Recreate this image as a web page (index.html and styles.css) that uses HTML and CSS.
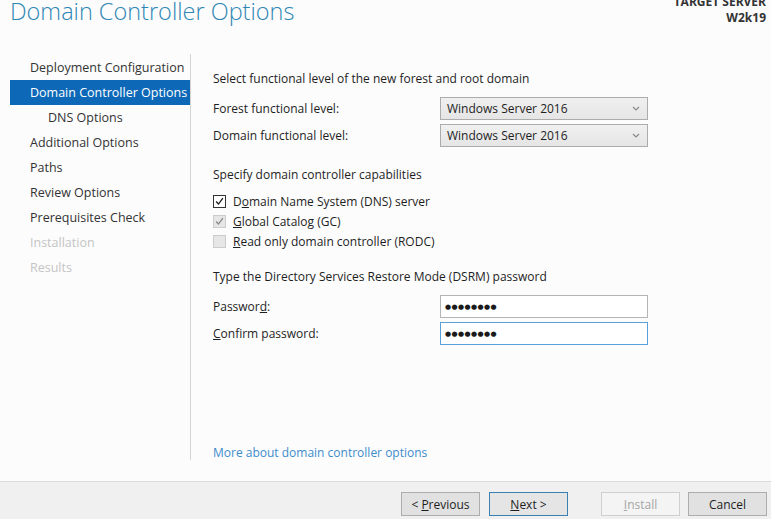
FILE: index.html
```html
<!DOCTYPE html>
<html lang="en">
<head>
  <meta charset="UTF-8" />
  <title>Domain Controller Options</title>
  <link rel="stylesheet" href="styles.css">
</head>
<body>

  <div class="header">
    <h1 class="page-title">Domain Controller Options</h1>
    <div class="target">
      <div>TARGET SERVER</div>
      <div>W2k19</div>
    </div>
  </div>

  <div class="main">
    <ul class="steps">
      <li class="step">Deployment Configuration</li>
      <li class="step active">Domain Controller Options</li>
      <li class="step sub">DNS Options</li>
      <li class="step">Additional Options</li>
      <li class="step">Paths</li>
      <li class="step">Review Options</li>
      <li class="step">Prerequisites Check</li>
      <li class="step disabled">Installation</li>
      <li class="step disabled">Results</li>
    </ul>

    <div class="content">
      <div class="section-title">Select functional level of the new forest and root domain</div>
      <div class="form-grid">
        <label class="field-label">Forest functional level:</label>
        <div class="select">
          <span>Windows Server 2016</span>
          <svg class="chevron" viewBox="0 0 8 5"><path d="M1 1l3 3 3-3" /></svg>
        </div>
        <label class="field-label">Domain functional level:</label>
        <div class="select">
          <span>Windows Server 2016</span>
          <svg class="chevron" viewBox="0 0 8 5"><path d="M1 1l3 3 3-3" /></svg>
        </div>
      </div>

      <div class="section-title gap-lg">Specify domain controller capabilities</div>
      <div class="checks">
        <div class="check-row">
          <span class="checkbox checked">
            <svg viewBox="0 0 13 13"><path d="M2.5 6.5l2.8 3 5.2-7" /></svg>
          </span>
          <span>D<u>o</u>main Name System (DNS) server</span>
        </div>
        <div class="check-row">
          <span class="checkbox checked dim">
            <svg viewBox="0 0 13 13"><path d="M2.5 6.5l2.8 3 5.2-7" /></svg>
          </span>
          <span><u>G</u>lobal Catalog (GC)</span>
        </div>
        <div class="check-row">
          <span class="checkbox dim"></span>
          <span><u>R</u>ead only domain controller (RODC)</span>
        </div>
      </div>

      <div class="section-title gap-md">Type the Directory Services Restore Mode (DSRM) password</div>
      <div class="form-grid">
        <label class="field-label">Passwor<u>d</u>:</label>
        <div class="textbox"><span class="dots">●●●●●●●●</span></div>
        <label class="field-label"><u>C</u>onfirm password:</label>
        <div class="textbox focused"><span class="dots">●●●●●●●●</span></div>
      </div>

      <a class="more-link" href="#">More about domain controller options</a>
    </div>
  </div>

  <div class="footer">
    <button class="btn">&lt; <u>P</u>revious</button>
    <button class="btn default"><u>N</u>ext &gt;</button>
    <button class="btn install" disabled><u>I</u>nstall</button>
    <button class="btn">Cancel</button>
  </div>

</body>
</html>
```

FILE: styles.css
```css
body {
  margin: 0;
  background-color: #fcfcfc;
  color: #1e1e1e;
  font-family: "Open Sans", "Noto Sans", sans-serif;
  font-size: 12px;
  width: 771px;
  height: 519px;
  overflow: hidden;
  display: flex;
  flex-direction: column;
}

.header {
  height: 54px;
  display: flex;
  justify-content: space-between;
  align-items: flex-start;
}

.page-title {
  margin: -3px 0 0 10px;
  font-size: 23.5px;
  line-height: 28px;
  font-weight: 300;
  color: #2e86b4;
}

.target {
  margin-top: -6px;
  padding-right: 5px;
  text-align: right;
  font-weight: bold;
  line-height: 16px;
  color: #333;
}

.main {
  flex: 1;
  display: flex;
  padding-bottom: 21px;
}

.steps {
  list-style: none;
  margin: 0;
  padding: 1px 0 0;
  width: 190px;
  border-right: 1px solid #d4d4d4;
}

.step {
  height: 25px;
  line-height: 26px;
  margin-left: 10px;
  padding-left: 20px;
  font-size: 12.5px;
  color: #333;
  white-space: nowrap;
}
.step.sub {
  padding-left: 38px;
}
.step.active {
  background-color: #0d69b8;
  color: #fff;
}
.step.disabled {
  color: #c4c4c4;
}

.content {
  flex: 1;
  padding: 17px 0 0 22px;
  display: flex;
  flex-direction: column;
}

.section-title {
  line-height: 16px;
  margin-bottom: 10px;
}
.gap-lg {
  margin-top: 20px;
  margin-bottom: 8px;
}
.gap-md {
  margin-top: 18px;
}

.form-grid {
  display: grid;
  grid-template-columns: 227px 208px;
  row-gap: 4px;
  align-items: center;
}

.select {
  height: 23px;
  box-sizing: border-box;
  border: 1px solid #acacac;
  background: linear-gradient(#f0f0f0, #e5e5e5);
  display: flex;
  align-items: center;
  justify-content: space-between;
  padding: 0 7px 0 6px;
}
.chevron {
  width: 8px;
  height: 5px;
  fill: none;
  stroke: #8a8a8a;
  stroke-width: 1.2;
}

.checks {
  display: flex;
  flex-direction: column;
}
.check-row {
  height: 20px;
  display: flex;
  align-items: center;
  gap: 7px;
}
.checkbox {
  width: 13px;
  height: 13px;
  box-sizing: border-box;
  border: 1px solid #333;
  background-color: #fff;
  display: flex;
}
.checkbox svg {
  width: 100%;
  height: 100%;
  fill: none;
  stroke: #1e1e1e;
  stroke-width: 1.6;
}
.checkbox.dim {
  border-color: #cccccc;
  background-color: #e6e6e6;
}
.checkbox.dim svg {
  stroke: #8a8a8a;
}

.textbox {
  height: 23px;
  box-sizing: border-box;
  border: 1px solid #b4b4b4;
  background-color: #fff;
  display: flex;
  align-items: center;
  padding-left: 4px;
}
.textbox.focused {
  border-color: #5b9fd9;
}
.dots {
  font-family: "DejaVu Sans", sans-serif;
  font-size: 7px;
  letter-spacing: 0.4px;
  color: #1a1a1a;
}

.more-link {
  margin-top: auto;
  margin-bottom: -1px;
  line-height: 16px;
  color: #3c8ccc;
  text-decoration: none;
}

.footer {
  height: 38px;
  border-top: 1px solid #dcdcdc;
  background-color: #f0f0f0;
  display: flex;
  justify-content: flex-end;
  align-items: flex-start;
  padding: 10px 4px 0 0;
  box-sizing: border-box;
}

.btn {
  width: 79px;
  height: 24px;
  margin-left: 9px;
  border: 1px solid #adadad;
  background-color: #e1e1e1;
  font-family: inherit;
  font-size: 12px;
  color: #1e1e1e;
  padding: 0;
}
.btn.default {
  border-color: #3c7fb1;
  background-color: #e5e5e5;
}
.btn.install {
  margin-left: 33px;
  border-color: #cfcfcf;
  background-color: #f4f4f4;
  color: #a6a6a6;
}
.btn.install + .btn {
  margin-left: 8px;
}
```
